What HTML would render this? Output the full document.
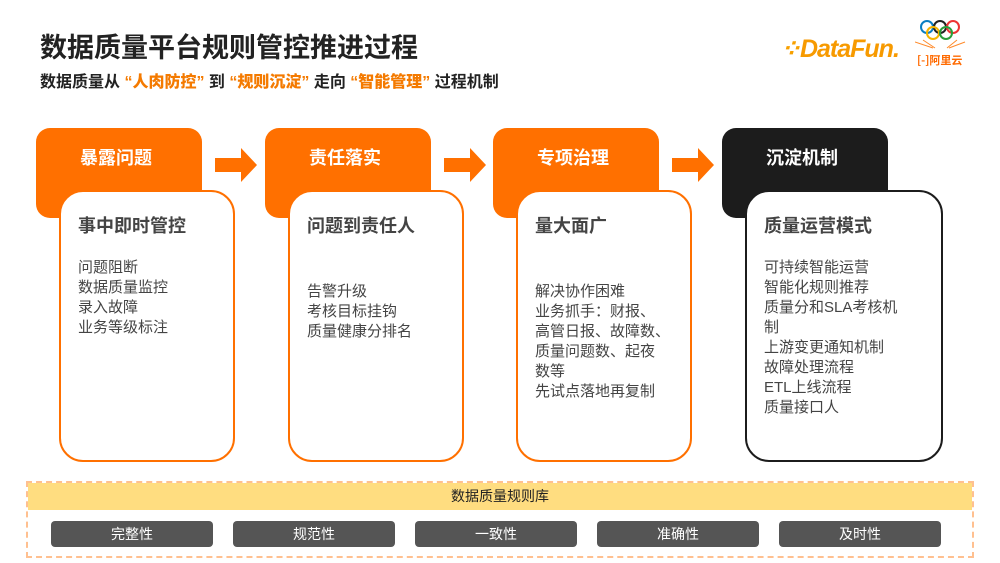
<!DOCTYPE html>
<html><head><meta charset="utf-8"><style>
*{margin:0;padding:0;box-sizing:border-box}
body{width:1000px;height:563px;background:#fff;position:relative;overflow:hidden;font-family:"Liberation Sans","Noto Sans CJK SC",sans-serif;color:#333}
.a{position:absolute}
.h1{left:40px;top:26px;font-size:27px;font-weight:bold;color:#222}
.sub{left:40px;top:68px;font-size:16px;font-weight:bold;color:#222}
.sub b{color:#f47a00}
.hd{width:166px;height:90px;border-radius:14px;background:#ff7000;color:#fff;font-size:18px;font-weight:bold;text-align:center;padding-top:16px;padding-right:6px}
.bx{width:176px;height:272px;border-radius:24px;border:2px solid #ff7000;background:#fff;padding:20px 0 0 17px}
.bx .t{font-size:18px;font-weight:bold;color:#444;margin-bottom:20px}
.bx .l{font-size:15px;line-height:20px;color:#444}
.arr{width:42px;height:34px}
.pill{top:521px;width:162px;height:26px;background:#555;border-radius:4px;color:#fff;font-size:14px;text-align:center;line-height:26px}
</style></head><body>
<div class="a h1">数据质量平台规则管控推进过程</div>
<div class="a sub">数据质量从 <b>“人肉防控”</b> 到 <b>“规则沉淀”</b> 走向 <b>“智能管理”</b> 过程机制</div>
<div class="a" style="left:780px;top:34px;font-size:25px;font-weight:bold;font-style:italic;color:#f7a000;letter-spacing:-1px">⁘<span style="color:#f79a00">DataFun.</span></div>
<svg class="a" style="left:915px;top:18px" width="60" height="55" viewBox="0 0 60 55">
<g fill="none" stroke-width="2"><circle cx="12" cy="9" r="6" stroke="#0a7ec2"/><circle cx="25" cy="9" r="6" stroke="#222"/><circle cx="38" cy="9" r="6" stroke="#e33"/><circle cx="18" cy="15" r="6" stroke="#f4b400"/><circle cx="31" cy="15" r="6" stroke="#2a9d3a"/></g>
<g stroke="#ff8a2a" stroke-width="1"><line x1="0" y1="24" x2="18" y2="30"/><line x1="50" y1="24" x2="34" y2="30"/><line x1="8" y1="22" x2="20" y2="30"/><line x1="42" y1="22" x2="32" y2="30"/></g>
<text x="2" y="46" font-size="11" fill="#ff6a00" font-weight="bold" font-family="Noto Sans CJK SC">[-]阿里云</text></svg>

<div class="a hd" style="left:36px;top:128px">暴露问题</div>
<div class="a hd" style="left:265px;top:128px">责任落实</div>
<div class="a hd" style="left:493px;top:128px">专项治理</div>
<div class="a hd" style="left:722px;top:128px;background:#1c1c1c">沉淀机制</div>

<svg class="a arr" style="left:215px;top:148px" viewBox="0 0 42 34"><path d="M0 10H26V0L42 17L26 34V24H0Z" fill="#ff7000"/></svg>
<svg class="a arr" style="left:444px;top:148px" viewBox="0 0 42 34"><path d="M0 10H26V0L42 17L26 34V24H0Z" fill="#ff7000"/></svg>
<svg class="a arr" style="left:672px;top:148px" viewBox="0 0 42 34"><path d="M0 10H26V0L42 17L26 34V24H0Z" fill="#ff7000"/></svg>

<div class="a bx" style="left:59px;top:190px"><div class="t">事中即时管控</div><div class="l">问题阻断<br>数据质量监控<br>录入故障<br>业务等级标注</div></div>
<div class="a bx" style="left:288px;top:190px"><div class="t">问题到责任人</div><div class="l" style="margin-top:44px">告警升级<br>考核目标挂钩<br>质量健康分排名</div></div>
<div class="a bx" style="left:516px;top:190px"><div class="t">量大面广</div><div class="l" style="margin-top:44px">解决协作困难<br>业务抓手：财报、<br>高管日报、故障数、<br>质量问题数、起夜<br>数等<br>先试点落地再复制</div></div>
<div class="a bx" style="left:745px;top:190px;width:198px;border-color:#1c1c1c"><div class="t">质量运营模式</div><div class="l">可持续智能运营<br>智能化规则推荐<br>质量分和SLA考核机<br>制<br>上游变更通知机制<br>故障处理流程<br>ETL上线流程<br>质量接口人</div></div>

<div class="a" style="left:26px;top:481px;width:948px;height:77px;border:2px dashed #ffc090"></div>
<div class="a" style="left:28px;top:483px;width:944px;height:27px;background:#ffdd80;text-align:center;font-size:14px;line-height:27px;color:#222">数据质量规则库</div>
<div class="a pill" style="left:51px">完整性</div>
<div class="a pill" style="left:233px">规范性</div>
<div class="a pill" style="left:415px">一致性</div>
<div class="a pill" style="left:597px">准确性</div>
<div class="a pill" style="left:779px">及时性</div>
</body></html>
